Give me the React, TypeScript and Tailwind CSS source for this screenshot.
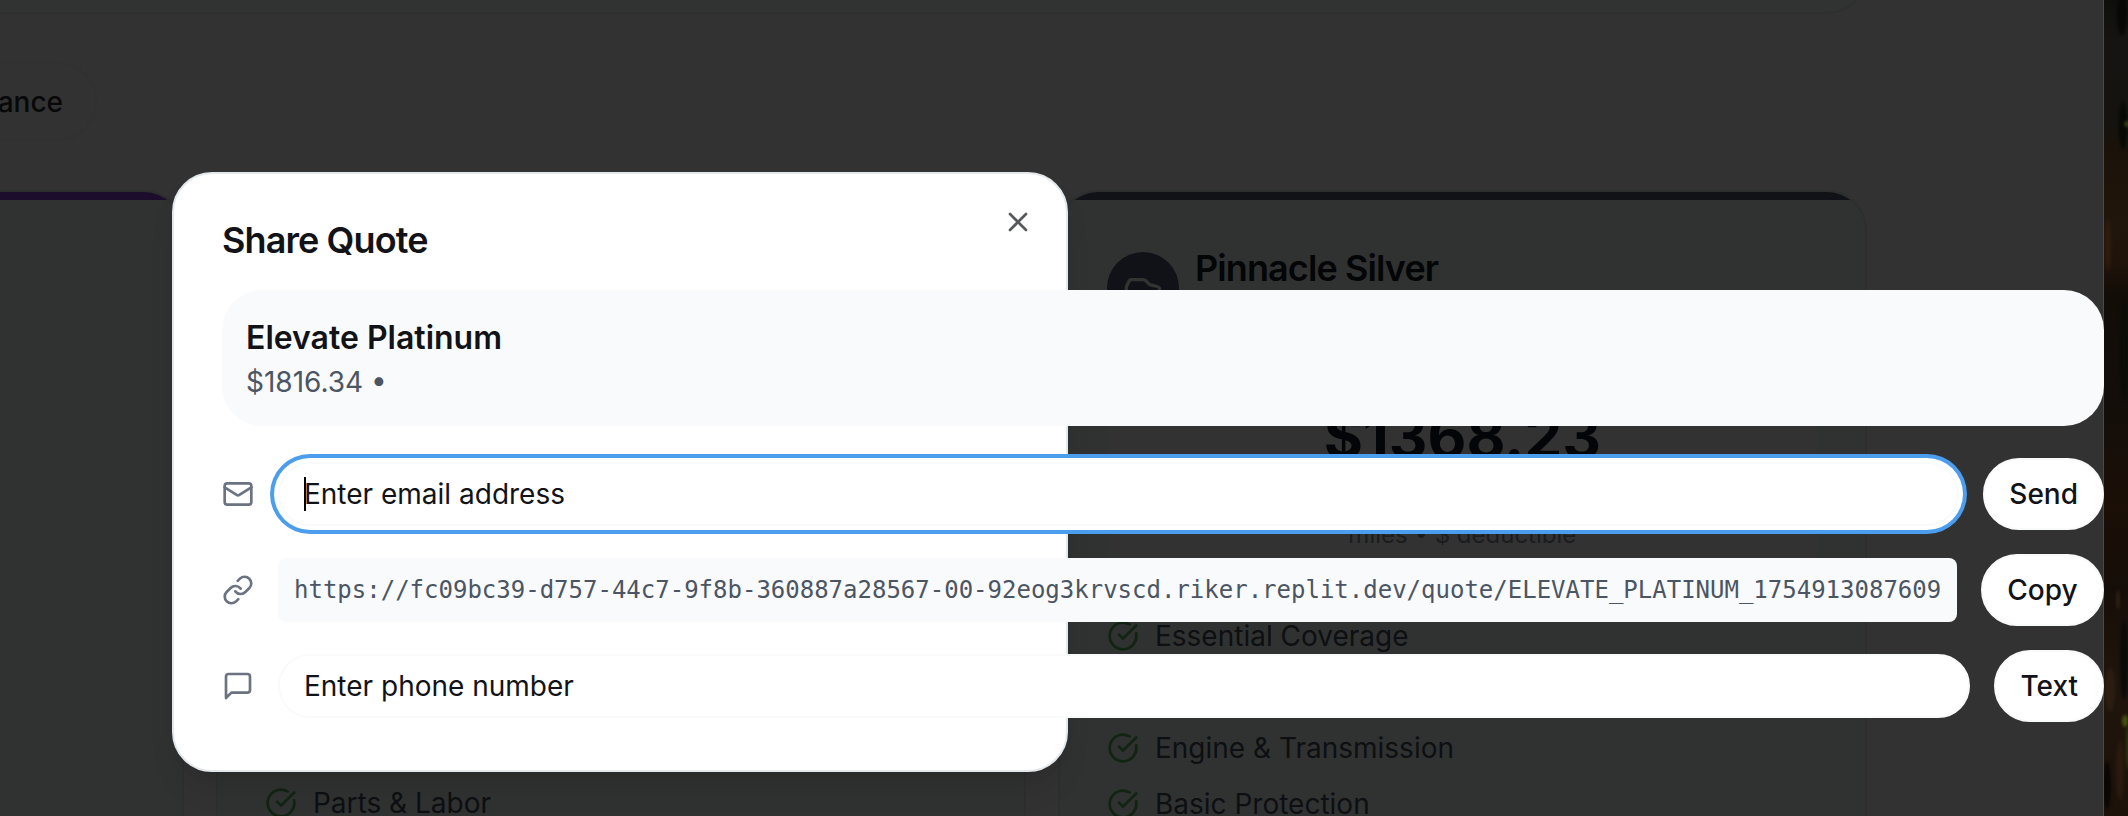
import React from "react";
import { X } from "lucide-react";

const stroke = {
  viewBox: "0 0 24 24",
  fill: "none",
  stroke: "currentColor",
  strokeWidth: 2,
  strokeLinecap: "round" as const,
  strokeLinejoin: "round" as const,
};

function MailIcon() {
  return (
    <svg {...stroke} className="size-8 shrink-0 text-[#6b7280]">
      <rect width="20" height="16" x="2" y="4" rx="2" />
      <path d="m22 7-8.97 5.7a1.94 1.94 0 0 1-2.06 0L2 7" />
    </svg>
  );
}

function LinkIcon() {
  return (
    <svg {...stroke} className="size-8 shrink-0 text-[#6b7280]">
      <path d="M10 13a5 5 0 0 0 7.54.54l3-3a5 5 0 0 0-7.07-7.07l-1.72 1.71" />
      <path d="M14 11a5 5 0 0 0-7.54-.54l-3 3a5 5 0 0 0 7.07 7.07l1.71-1.71" />
    </svg>
  );
}

function MessageIcon() {
  return (
    <svg {...stroke} className="size-8 shrink-0 text-[#6b7280]">
      <path d="M21 15a2 2 0 0 1-2 2H7l-4 4V5a2 2 0 0 1 2-2h14a2 2 0 0 1 2 2z" />
    </svg>
  );
}

function CarIcon() {
  return (
    <svg {...stroke} className="size-10 text-[#333333]">
      <path d="M19 17h2c.6 0 1-.4 1-1v-3c0-.9-.7-1.7-1.5-1.9C18.7 10.6 16 10 16 10s-1.3-1.4-2.2-2.3c-.5-.4-1.1-.7-1.8-.7H5c-.6 0-1.1.4-1.4.9l-1.4 2.9A3.7 3.7 0 0 0 2 12v4c0 .6.4 1 1 1h2" />
      <circle cx="7" cy="17" r="2" />
      <path d="M9 17h6" />
      <circle cx="17" cy="17" r="2" />
    </svg>
  );
}

function Feature({ label }: { label: string }) {
  return (
    <li className="flex h-10 items-center gap-4 text-[28px] leading-10 whitespace-nowrap text-[#0d0f12]">
      <svg {...stroke} className="size-8 shrink-0 text-[#112413]">
        <path d="M21.801 10A10 10 0 1 1 17 3.335" />
        <path d="m9 11 3 3L22 4" />
      </svg>
      {label}
    </li>
  );
}

function PlanCard({ bar, children }: { bar: string; children?: React.ReactNode }) {
  return (
    <section className="h-[680px] w-[809.33px] shrink-0 overflow-hidden rounded-[40px] border-2 border-[#2d2f2f] bg-[#303231]">
      <div className={`h-2 ${bar}`} />
      {children}
    </section>
  );
}

function ActionButton({ label }: { label: string }) {
  return (
    <button className="h-[72px] shrink-0 rounded-[40px] border-2 border-[#f9fafa] bg-white px-6 text-[28px] leading-10 font-medium text-[#111318]">
      {label}
    </button>
  );
}

function Backdrop() {
  return (
    <div className="flex h-[816px] w-[2128px] overflow-hidden">
      <main className="flex w-[2104px] shrink-0 flex-col overflow-hidden border-r border-[#4a4a4a] bg-[#323232]">
        <div className="-mt-20 -ml-10 h-[94px] w-[1907px] shrink-0 rounded-b-[40px] border-2 border-[#2e3030] bg-[#303332]" />
        <div className="mt-12 flex h-[79px] w-[97px] shrink-0 items-center justify-end rounded-r-[40px] border-2 border-l-0 border-[#313131] pr-8 text-[28px] font-medium text-[#070809]">
          Insurance
        </div>
        <div className="mt-[49px] -ml-[625px] flex shrink-0 gap-8">
          <PlanCard bar="bg-[#1d0d2c]" />
          <PlanCard bar="bg-[#1d0d2c]">
            <ul className="flex flex-col gap-4 pt-[583px] pl-[46.67px]">
              <Feature label="Parts & Labor" />
            </ul>
          </PlanCard>
          <PlanCard bar="bg-[#111217]">
            <div className="flex gap-4 pt-[52px] pl-[47.33px]">
              <div className="flex size-[72px] items-center justify-center rounded-full bg-[#111217]">
                <CarIcon />
              </div>
              <h2 className="-mt-0.5 text-[36px] leading-9 font-semibold tracking-tight text-[#040506]">
                Pinnacle Silver
              </h2>
            </div>
            <div className="mx-12 mt-12 flex h-[212px] flex-col items-center rounded-3xl bg-[#323232] pt-7">
              <p className="text-[60px] leading-[72px] font-bold text-[#040508]">$1368.23</p>
              <p className="mt-[47px] text-2xl leading-8 text-[#1b1c1e]">miles • $ deductible</p>
            </div>
            <ul className="mt-8 flex flex-col gap-4 pl-[47.33px]">
              <Feature label="Essential Coverage" />
              <Feature label="24/7 Support" />
              <Feature label="Engine & Transmission" />
              <Feature label="Basic Protection" />
            </ul>
          </PlanCard>
        </div>
      </main>
      <Bark />
    </div>
  );
}

function Bark() {
  return (
    <svg viewBox="0 0 24 816" className="h-[816px] w-6 shrink-0">
      <defs>
        <linearGradient id="bark" x1="0" y1="0" x2="0" y2="1">
          <stop offset="0" stopColor="#0e0f0c" />
          <stop offset=".05" stopColor="#161412" />
          <stop offset=".15" stopColor="#15130f" />
          <stop offset=".19" stopColor="#1b1209" />
          <stop offset=".28" stopColor="#21160b" />
          <stop offset=".32" stopColor="#20130a" />
          <stop offset=".36" stopColor="#120d07" />
          <stop offset=".5" stopColor="#130e09" />
          <stop offset=".62" stopColor="#1b0f07" />
          <stop offset=".72" stopColor="#150d07" />
          <stop offset=".83" stopColor="#20150c" />
          <stop offset="1" stopColor="#1c120a" />
        </linearGradient>
        <filter id="soft" colorInterpolationFilters="sRGB" x="-100%" y="-20%" width="300%" height="140%">
          <feGaussianBlur stdDeviation="1.6" />
        </filter>
      </defs>
      <rect width="24" height="816" fill="url(#bark)" />
      <g filter="url(#soft)">
        <ellipse cx="18" cy="14" rx="5" ry="22" fill="#070806" />
        <ellipse cx="19" cy="125" rx="4" ry="24" fill="#060904" />
        <ellipse cx="4" cy="245" rx="3" ry="26" fill="#2f1d0e" />
        <ellipse cx="20" cy="350" rx="4" ry="50" fill="#0b0c06" />
        <ellipse cx="20" cy="660" rx="4" ry="40" fill="#0a0a09" />
        <ellipse cx="6" cy="690" rx="5" ry="22" fill="#2b1d12" />
        <ellipse cx="3" cy="785" rx="4" ry="24" fill="#0a0604" />
        <ellipse cx="16" cy="770" rx="4" ry="30" fill="#2b1a0e" />
        <ellipse cx="14" cy="600" rx="1.5" ry="10" fill="#33261a" />
        <ellipse cx="23" cy="124" rx="2.5" ry="3" fill="#3c4214" />
        <ellipse cx="21" cy="721" rx="3" ry="6" fill="#46520f" />
        <ellipse cx="24" cy="748" rx="2" ry="22" fill="#2c3611" />
      </g>
    </svg>
  );
}

function ShareDialog() {
  return (
    <div
      role="dialog"
      className="absolute top-[172px] left-[172px] h-[600px] w-[896px] rounded-[40px] border-2 border-[#e2e8ec] bg-white p-12 shadow-[0_20px_30px_-6px_rgba(0,0,0,0.1),0_8px_12px_-8px_rgba(0,0,0,0.1)]"
    >
      <button aria-label="Close" className="absolute top-8 right-8 text-[#58595d]">
        <X className="size-8" />
      </button>
      <div className="flex w-[1882px] flex-col">
        <h1 className="h-9 text-[36px] leading-9 font-semibold tracking-tight text-[#111318]">Share Quote</h1>
        <div className="mt-8 h-[136px] rounded-[40px] bg-[#f9fafc] p-6">
          <h3 className="text-[32px] leading-[48px] font-semibold text-[#111318]">Elevate Platinum</h3>
          <p className="text-[28px] leading-10 text-[#4b5563]">$1816.34 •</p>
        </div>
        <div className="mt-8 flex flex-col gap-6">
          <div className="flex items-center gap-6">
            <MailIcon />
            <div className="flex h-16 flex-1 items-center rounded-[40px] border-2 border-[#f9fafa] bg-white px-6 text-[28px] text-[#111318] shadow-[0_0_0_4px_#ffffff,0_0_0_8px_#4b9ded]">
              <span className="-mr-0.5 h-[34px] w-0.5 bg-black" />
              Enter email address
            </div>
            <ActionButton label="Send" />
          </div>
          <div className="flex items-center gap-6">
            <LinkIcon />
            <div className="flex h-16 w-[1679px] items-center rounded-lg bg-[#f9fafc] px-4 font-['DejaVu_Sans_Mono',monospace] text-2xl whitespace-nowrap text-[#4b5563]">
              https://fc09bc39-d757-44c7-9f8b-360887a28567-00-92eog3krvscd.riker.replit.dev/quote/ELEVATE_PLATINUM_1754913087609
            </div>
            <div className="flex flex-1 flex-col">
              <ActionButton label="Copy" />
            </div>
          </div>
          <div className="flex items-center gap-6">
            <MessageIcon />
            <div className="flex h-16 flex-1 items-center rounded-[40px] border-2 border-[#f9fafa] bg-white px-6 text-[28px] text-[#111318]">
              Enter phone number
            </div>
            <ActionButton label="Text" />
          </div>
        </div>
      </div>
    </div>
  );
}

export default function App() {
  return (
    <div className="relative h-[816px] w-[2128px] overflow-hidden font-['Inter',sans-serif] antialiased">
      <Backdrop />
      <ShareDialog />
    </div>
  );
}
